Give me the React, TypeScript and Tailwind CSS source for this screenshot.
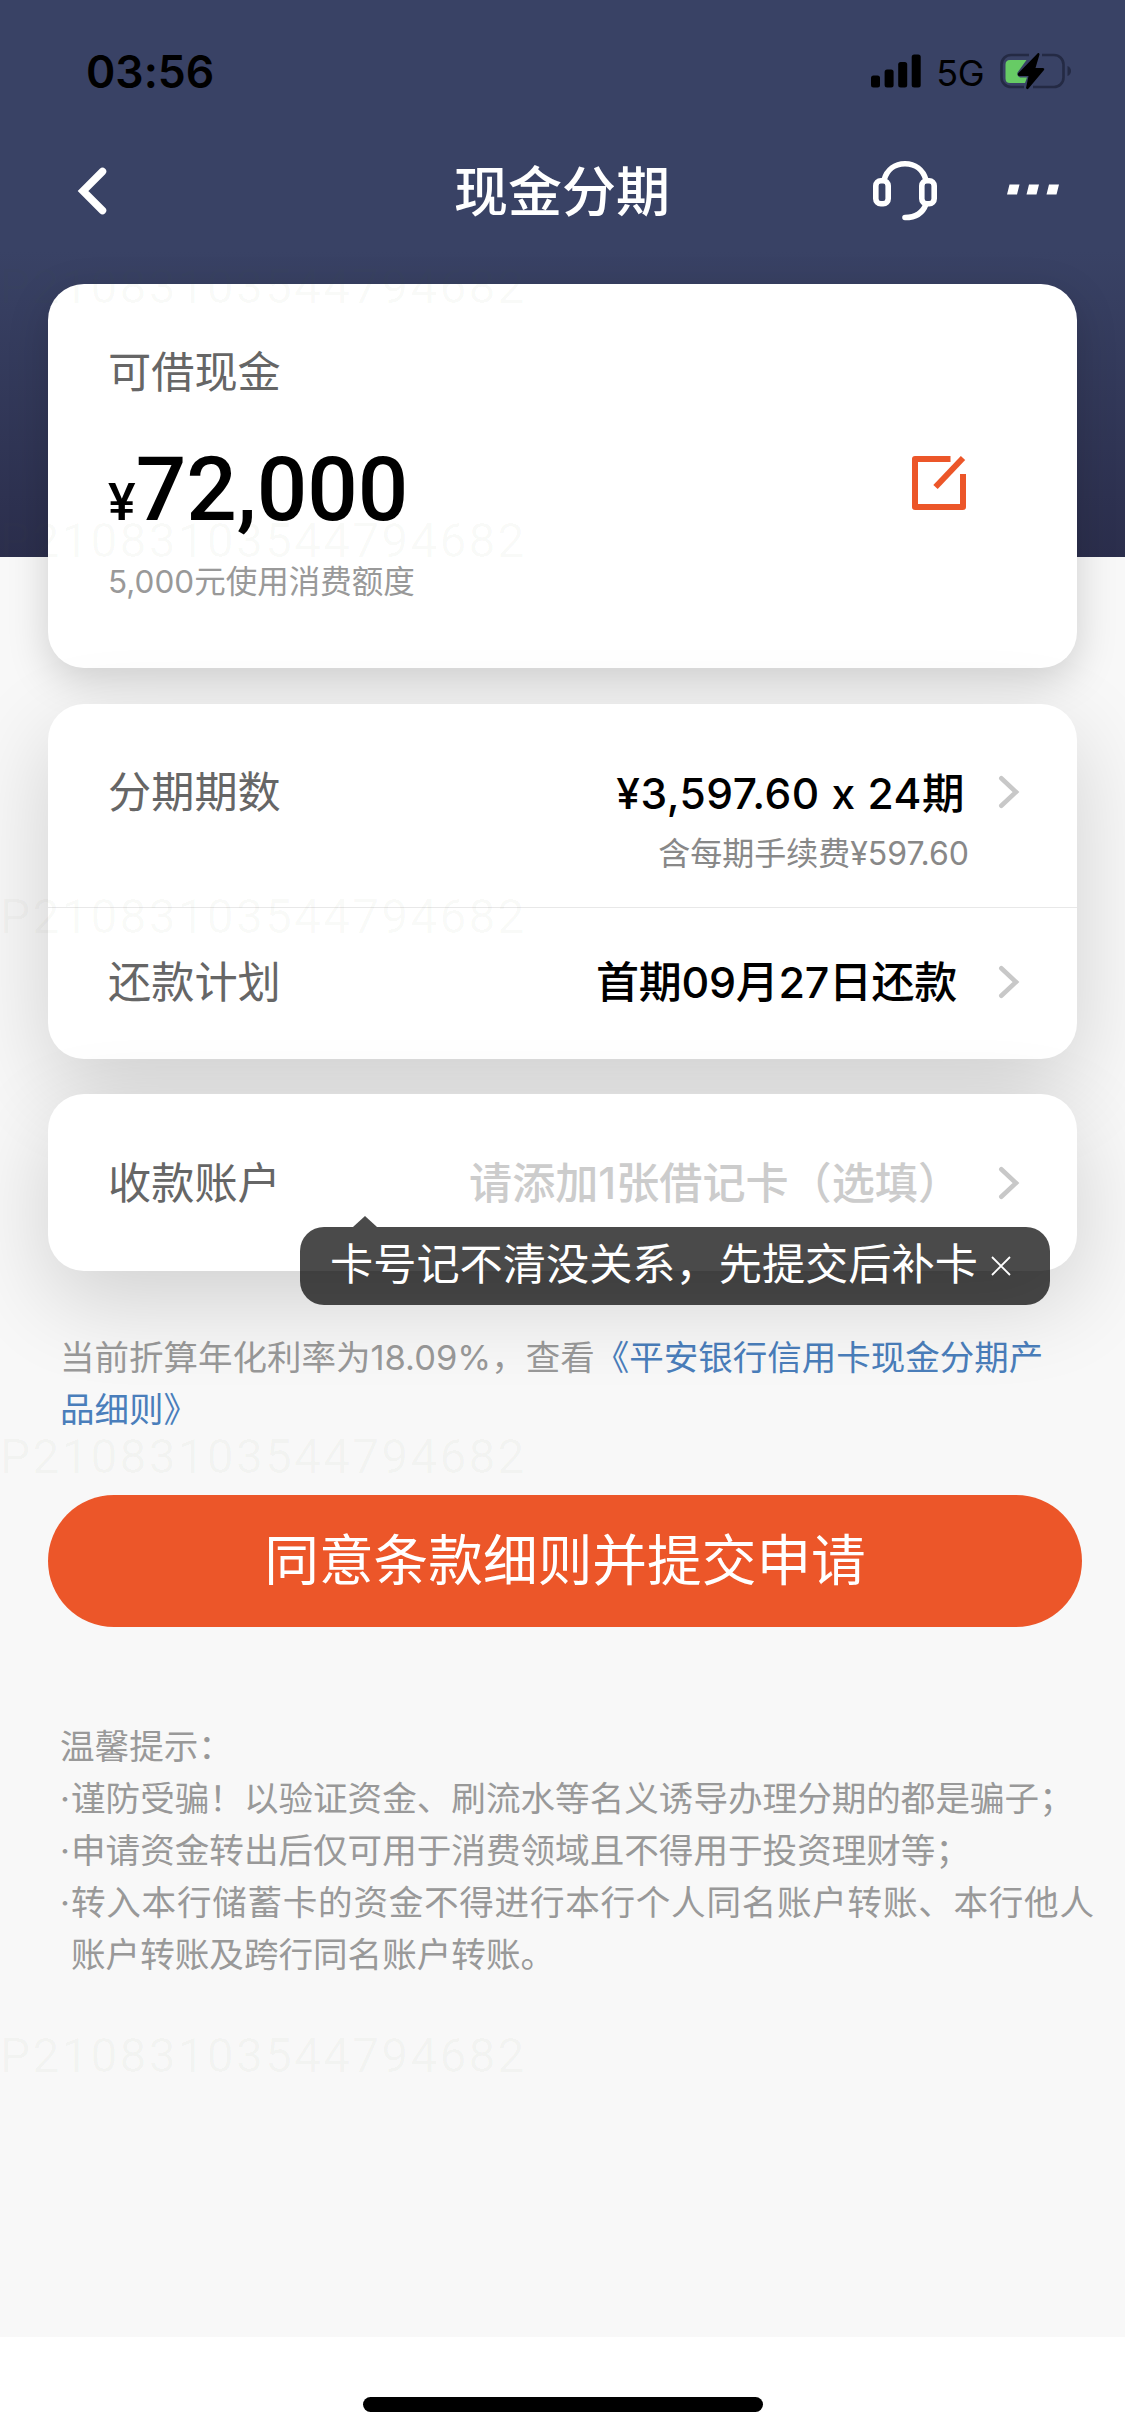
import React from 'react';

interface RowProps {
  label: string;
  className?: string;
  children: React.ReactNode;
}

interface IconProps {
  className?: string;
}

const WATERMARK = 'P21083103544794682';

const tips: string[] = [
  '谨防受骗！以验证资金、刷流水等名义诱导办理分期的都是骗子；',
  '申请资金转出后仅可用于消费领域且不得用于投资理财等；',
  '转入本行储蓄卡的资金不得进行本行个人同名账户转账、本行他人账户转账及跨行同名账户转账。',
];

function SignalIcon() {
  return (
    <svg className="h-[34px] w-[50px]" viewBox="0 0 50 34">
      <rect x="0" y="21.5" width="9" height="12" rx="2.5" />
      <rect x="13.6" y="15.5" width="9" height="18" rx="2.5" />
      <rect x="27.2" y="8" width="9" height="25.5" rx="2.5" />
      <rect x="40.7" y="0.5" width="9" height="33" rx="2.5" />
    </svg>
  );
}

function BatteryIcon() {
  return (
    <svg className="h-[38px] w-[72px]" viewBox="0 0 72 38">
      <path
        d="M29 3H11A9.500 9.500 0 0 0 1.500 12.500V25.500A9.500 9.500 0 0 0 11 35H24M42 3H54A9.500 9.500 0 0 1 63.500 12.500V25.500A9.500 9.500 0 0 1 54 35H33"
        fill="none"
        stroke="#242a44"
        strokeWidth="2.600"
      />
      <path d="M67.500 14C72.200 15.500 72.200 22.500 67.500 24Z" fill="#242a44" />
      <path
        d="M10 8H26.500L17.500 20.500Q16.500 24 20 25.500H27L25 31H10Q5.500 31 5.500 26.500V12.500Q5.500 8 10 8Z"
        fill="#67cb65"
      />
      <path d="M38 1L18 21.500Q17 24 20 24H28.500L26 36Q27 38 28.500 36.500L44 18Q45 16 42.500 16H35.500L39.500 2.500Q39.500 0.500 38 1Z" />
    </svg>
  );
}

function BackIcon() {
  return (
    <svg className="h-[50px] w-[32px]" viewBox="0 0 32 50" fill="none" stroke="#fff" strokeWidth="7.500">
      <path d="M26.500 5.500L7 25L26.500 44.500" strokeLinecap="round" />
    </svg>
  );
}

function HeadsetIcon() {
  return (
    <svg className="h-[62px] w-[66px]" viewBox="0 0 66 62" fill="none" stroke="#fff" strokeWidth="5.600">
      <rect x="3.800" y="20.800" width="12.400" height="23" rx="5" />
      <rect x="49.800" y="20.800" width="12.400" height="23" rx="5" />
      <path d="M12 20C15 9.500 23 3.800 33 3.800S51 9.500 54 20" />
      <path d="M54 44C51 52.500 43.500 57.500 33 57.500" strokeLinecap="round" />
    </svg>
  );
}

function MoreIcon() {
  return (
    <svg className="mb-[2px] h-[12px] w-[52px]" viewBox="0 0 52 12" fill="#fff">
      <path d="M2.500 .5H12.500L10 10.500H0ZM22 .5H32L29.500 10.500H19.500ZM42 .5H52L49.500 10.500H39.500Z" />
    </svg>
  );
}

function EditIcon() {
  return (
    <svg className="mt-[3px] h-[56px] w-[56px]" viewBox="0 0 56 56" fill="none" stroke="#ec5629" strokeWidth="6">
      <path d="M39.500 4H4V52H52V19" strokeLinejoin="round" />
      <path d="M52 3L24.500 32" />
    </svg>
  );
}

function Chevron({ className = '' }: IconProps) {
  return (
    <svg
      className={`h-[34px] w-[22px] ${className}`}
      viewBox="0 0 22 34"
      fill="none"
      stroke="#c8c8c8"
      strokeWidth="4.600"
      strokeLinecap="round"
    >
      <path d="M3.300 3.300L18 17L3.300 30.700" />
    </svg>
  );
}

function Row({ label, className = '', children }: RowProps) {
  return (
    <div className={`flex items-center justify-between pr-[57px] pl-[60px] ${className}`}>
      <span className="text-[43.200px] leading-[60px] text-[#666]">{label}</span>
      {children}
    </div>
  );
}

function Watermark({ className = '' }: IconProps) {
  return (
    <div
      className={`pointer-events-none absolute left-0 font-['Roboto'] text-[48px] leading-[48px] tracking-[2.100px] text-[#506030]/[0.03] ${className}`}
    >
      {WATERMARK}
    </div>
  );
}

export default function App() {
  return (
    <div className="relative flex h-[2435px] w-[1125px] flex-col overflow-hidden bg-[#f8f8f8] font-['Inter','Noto_Sans_CJK_SC',sans-serif] text-black [font-feature-settings:'calt'_0]">
      <header className="h-[557px] shrink-0 bg-linear-to-b from-[#394265] from-45% to-[#2b2e4c]">
        <div className="flex h-[142px] items-center justify-between pr-[53px] pl-[86px]">
          <span className="pt-[2px] text-[44.500px] font-semibold">03:56</span>
          <div className="flex items-center">
            <SignalIcon />
            <span className="mr-[16px] ml-[15px] pt-[3px] text-[36px] tracking-[-0.500px]">5G</span>
            <BatteryIcon />
          </div>
        </div>
        <nav className="flex h-[98px] items-center pr-[66px] pl-[76px]">
          <BackIcon />
          <h1 className="ml-[346px] pt-[3px] text-[54px] leading-[80px] font-medium text-white">现金分期</h1>
          <div className="ml-auto flex items-center gap-[69px]">
            <HeadsetIcon />
            <MoreIcon />
          </div>
        </nav>
      </header>

      <main className="relative -mt-[273px] flex flex-1 flex-col">
        <section className="mx-[48px] h-[384px] rounded-[36px] bg-white pl-[60px] shadow-[0_12px_40px_rgba(0,0,0,0.17)]">
          <div className="pt-[58px] text-[43.200px] leading-[60px] text-[#666]">可借现金</div>
          <div className="flex h-[158px] items-center justify-between pr-[110px]">
            <div className="pt-[30px] font-['Roboto'] text-[89px] leading-[100px] font-medium">
              <span className="text-[52px]">¥</span>72,000
            </div>
            <EditIcon />
          </div>
          <div className="text-[31.500px] leading-[44px] text-[#999]">5,000元使用消费额度</div>
        </section>

        <section className="mx-[48px] mt-[36px] h-[355px] rounded-[36px] bg-white shadow-[0_30px_90px_rgba(0,0,0,0.16)]">
          <div className="h-[204px] border-b border-[#e8e8e8] pt-[55px]">
            <Row label="分期期数">
              <div className="flex items-center text-[42.500px] leading-[60px] font-medium">
                <span className="pt-[5px] tracking-[0.500px]">¥3,597.60 x 24期</span>
                <Chevron className="ml-[33px]" />
              </div>
            </Row>
            <div className="pr-[108px] text-right text-[32px] leading-[60px] text-[#888]">
              含每期手续费¥597.60
            </div>
          </div>
          <Row label="还款计划" className="h-[148px]">
            <div className="flex items-center text-[43px] leading-[60px] font-medium tracking-[-0.300px]">
              首期09月27日还款
              <Chevron className="ml-[41px]" />
            </div>
          </Row>
        </section>

        <section className="relative mx-[48px] mt-[35px] h-[177px] rounded-[36px] bg-white shadow-[0_30px_90px_rgba(0,0,0,0.16)]">
          <Row label="收款账户" className="h-[177px]">
            <div className="flex items-center text-[43.100px] leading-[60px] font-medium text-[#ccc]">
              请添加1张借记卡（选填）
              <Chevron className="ml-[37px]" />
            </div>
          </Row>
          <div className="absolute top-[133px] left-[252px] flex h-[78px] w-[750px] items-center rounded-[24px] bg-[#000]/[0.71] pl-[30px] text-white">
            <svg className="absolute -top-[11px] left-[53px] h-[11px] w-[24px]" viewBox="0 0 24 11">
              <path d="M0 11L12 0L24 11Z" fill="#4a4a4a" />
            </svg>
            <span className="pb-[4px] text-[43.200px] leading-[60px] whitespace-nowrap">卡号记不清没关系，先提交后补卡</span>
            <svg className="ml-[13px] h-[20px] w-[20px]" viewBox="0 0 20 20" fill="none" stroke="#fff" strokeWidth="1.800">
              <path d="M1 1L19 19M19 1L1 19" />
            </svg>
          </div>
        </section>

        <p className="mt-[61px] ml-[60px] w-[1000px] text-[34.500px] leading-[52px] text-[#999]">
          当前折算年化利率为18.09%，查看
          <a className="text-[#4a7ebb]">《平安银行信用卡现金分期产品细则》</a>
        </p>

        <button className="mt-[59px] ml-[48px] h-[132px] w-[1034px] rounded-full bg-[#ec5629] pb-[1px] text-[54.700px] text-white">
          同意条款细则并提交申请
        </button>

        <div className="mt-[93px] pl-[60px] text-[34.600px] leading-[52px] text-[#999]">
          <div>温馨提示：</div>
          {tips.map((tip) => (
            <div className="flex" key={tip}>
              <span className="w-[11px] shrink-0">·</span>
              <p className="w-[1023px] text-justify">{tip}</p>
            </div>
          ))}
        </div>
      </main>

      <footer className="flex h-[98px] shrink-0 justify-center bg-white pt-[60px]">
        <div className="h-[15px] w-[400px] rounded-full bg-black" />
      </footer>

      <Watermark className="top-[263px]" />
      <Watermark className="top-[517px]" />
      <Watermark className="top-[893px]" />
      <Watermark className="top-[1433px]" />
      <Watermark className="top-[2032px]" />
    </div>
  );
}
